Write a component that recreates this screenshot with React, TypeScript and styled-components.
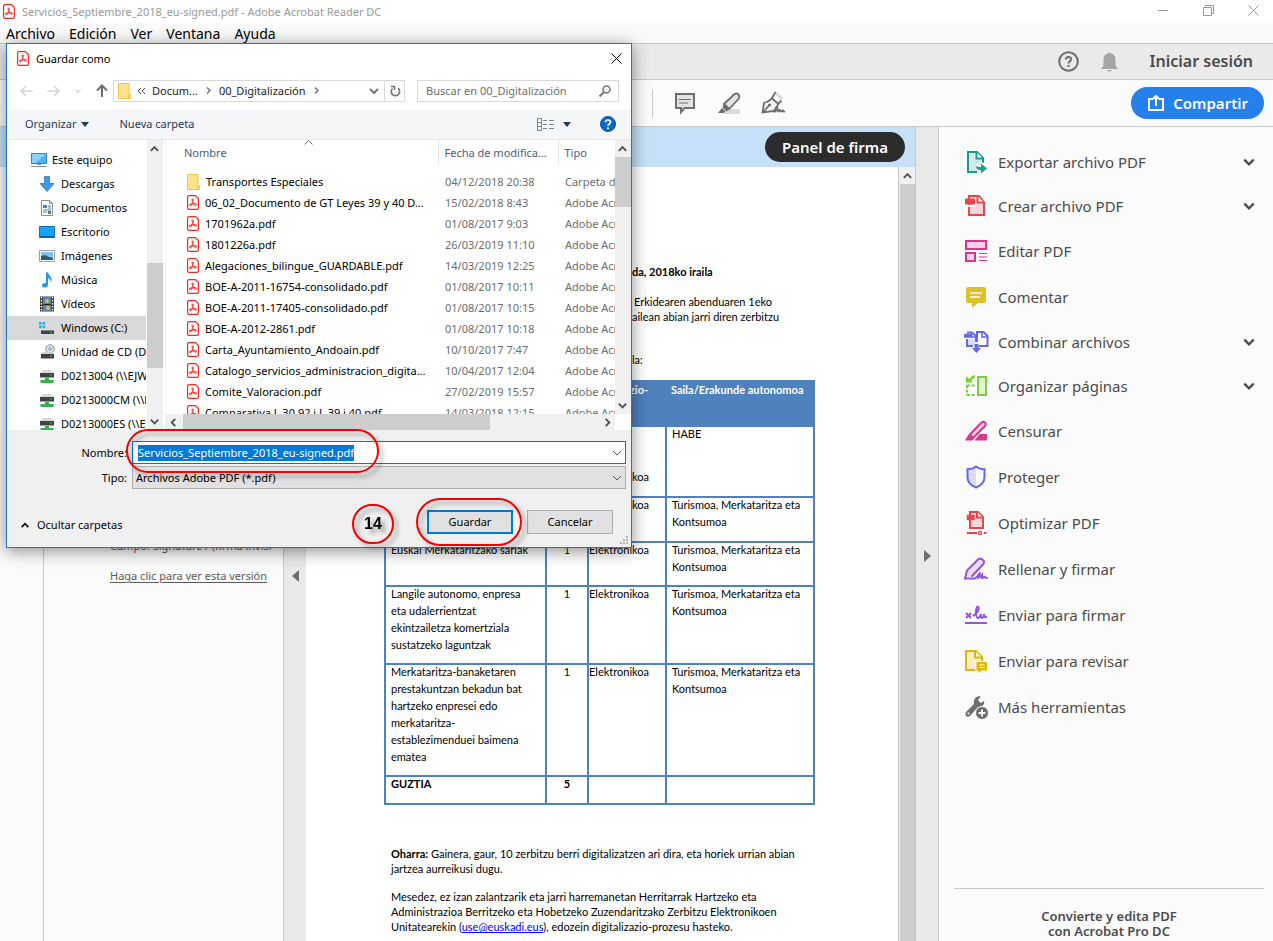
import React, { useEffect, useRef } from "react";
import styled, { createGlobalStyle, css } from "styled-components";

const Global = createGlobalStyle`
  *, *::before, *::after { box-sizing: border-box; }
  html, body, #root { height: 100%; }
  body {
    margin: 0;
    overflow: hidden;
    background: #fff;
    color: #000;
    font: 12px/16px "Noto Sans", "Open Sans", sans-serif;
  }
  button, input, select { font: inherit; color: inherit; }
  button { margin: 0; padding: 0; border: 0; background: none; text-align: left; }
  svg { display: block; flex: none; }
`;

/* ---------- application window ---------- */

const AppWindow = styled.div`
  position: relative;
  display: flex;
  flex-direction: column;
  height: 100vh;
  overflow: hidden;
`;

const TitleBar = styled.header`
  display: flex;
  align-items: center;
  height: 23px;
  flex: none;
  padding: 0 14px 0 3px;
  gap: 7px;
  background: #fff;
  color: #999;
  font-size: 11px;
`;

const WindowButtons = styled.div`
  display: flex;
  align-items: center;
  gap: 34px;
  margin-left: auto;
  padding-bottom: 2px;
`;

const MenuBar = styled.nav`
  display: flex;
  align-items: center;
  gap: 14px;
  height: 21px;
  flex: none;
  padding: 2px 6px 0;
  background: #fafafa;
  border-bottom: 1px solid #c8c8c8;
  font-size: 14px;
  line-height: 18px;
`;

const AccountBar = styled.div`
  display: flex;
  align-items: center;
  justify-content: flex-end;
  height: 36px;
  flex: none;
  padding: 0 20px;
  background: #eaeaea;
  border-bottom: 1px solid #c8c8c8;
  color: #4b4b4b;
`;

const IconButton = styled.button<{ $gap?: number }>`
  display: block;
  margin-right: ${(p) => p.$gap ?? 0}px;
`;

const SignIn = styled.button`
  padding-bottom: 2px;
  font-size: 16px;
  line-height: 20px;
  font-weight: 600;
`;

const Toolbar = styled.div`
  display: flex;
  align-items: center;
  height: 47px;
  flex: none;
  padding: 0 9px 0 652px;
  background: #fbfbfb;
  border-bottom: 1px solid #c8c8c8;
  color: #6e6e6e;
`;

const ToolbarRule = styled.span`
  width: 1px;
  height: 28px;
  margin-right: 20px;
  background: #c8c8c8;
`;

const ShareButton = styled.button`
  display: flex;
  align-items: center;
  gap: 8px;
  height: 32px;
  margin-left: auto;
  padding: 0 16px;
  border-radius: 16px;
  background: #2680eb;
  color: #fff;
  font-size: 15px;
  font-weight: 600;
`;

const Workspace = styled.div`
  display: flex;
  flex: 1;
  min-height: 0;
`;

const MainColumn = styled.main`
  display: flex;
  flex-direction: column;
  flex: 1;
  min-width: 0;
  border-right: 1px solid #c8c8c8;
`;

const SignatureBar = styled.div`
  display: flex;
  align-items: center;
  justify-content: flex-end;
  height: 40px;
  flex: none;
  padding: 0 10px;
  background: #c6e1f7;
`;

const SignatureButton = styled.button`
  height: 30px;
  padding: 0 17px;
  border-radius: 15px;
  background: #2c2c2c;
  color: #fff;
  font-size: 15px;
  font-weight: 600;
`;

const Panes = styled.div`
  display: flex;
  flex: 1;
  min-height: 0;
`;

const Rail = styled.div`
  width: 44px;
  flex: none;
  background: #fbfbfb;
  border-right: 1px solid #c8c8c8;
`;

const SignaturePane = styled.aside`
  display: flex;
  flex-direction: column;
  gap: 14px;
  width: 240px;
  flex: none;
  padding: 371px 8px 0 66px;
  overflow: hidden;
  background: #fbfbfb;
  border-right: 1px solid #c8c8c8;
  color: #5a5a5a;
  font-size: 11px;
  white-space: nowrap;
  a { color: inherit; text-underline-offset: 2px; }
`;

const Collapser = styled.button<{ $top: number; $edge?: boolean }>`
  display: flex;
  justify-content: center;
  width: 22px;
  flex: none;
  padding-top: ${(p) => p.$top}px;
  background: #e9e9e9;
  ${(p) => p.$edge && css`border-right: 1px solid #c8c8c8; width: 23px;`}
`;

/* ---------- scroll bars ---------- */

const Track = styled.div<{ $horizontal?: boolean; $size: number }>`
  display: flex;
  flex-direction: ${(p) => (p.$horizontal ? "row" : "column")};
  ${(p) => (p.$horizontal ? "height" : "width")}: ${(p) => p.$size}px;
  flex: none;
  background: #f0f0f0;
`;

const Arrow = styled.button`
  display: grid;
  place-items: center;
  width: 15px;
  height: 17px;
  flex: none;
  color: #505050;
`;

const Thumb = styled.div<{ $length?: number; $offset?: number; $horizontal?: boolean }>`
  background: #cdcdcd;
  flex: none;
  ${(p) =>
    p.$horizontal
      ? css`width: ${p.$length}px; margin: 0 auto 0 2px;`
      : css`
          height: ${p.$length}px;
          margin-top: ${p.$offset ?? 0}px;
          margin-bottom: auto;
        `}
`;

const PageTrack = styled(Track)`
  border-left: 1px solid #c8c8c8;
  padding-left: 1px;
`;

const PageThumb = styled.div`
  flex: 1;
  background: #cdcdcd;
`;

/* ---------- document ---------- */

const Page = styled.article`
  flex: 1;
  min-width: 0;
  padding: 97px 78px 0 78px;
  background: #fff;
  overflow: hidden;
  font: 11px/15px Lato, "Open Sans", sans-serif;
`;

const Line = styled.p<{ $indent?: number; $space?: number; $bold?: boolean }>`
  margin: 0 0 ${(p) => p.$space ?? 0}px;
  padding-left: ${(p) => p.$indent ?? 7}px;
  font-weight: ${(p) => (p.$bold ? 700 : 400)};
  white-space: nowrap;
  a { color: #00f; }
`;

const Services = styled.table`
  width: 431px;
  border-collapse: collapse;
  table-layout: fixed;
  line-height: 17px;
`;

const Head = styled.th`
  height: 45px;
  padding: 0 4px;
  vertical-align: top;
  text-align: left;
  line-height: 15px;
  white-space: nowrap;
  background: #4f81bd;
  color: #fff;
  border: 2px solid #4f81bd;
  border-left: 1px solid #fff;
  &:first-child { border-left: 2px solid #4f81bd; }
`;

const CellBox = styled.td<{ $h?: number; $center?: boolean; $tight?: boolean; $bold?: boolean }>`
  height: ${(p) => (p.$h ? `${p.$h}px` : "auto")};
  padding: 0 ${(p) => (p.$tight ? 0 : 4)}px 0 ${(p) => (p.$tight ? 0 : p.$center ? 4 : 5)}px;
  vertical-align: top;
  text-align: ${(p) => (p.$center ? "center" : "left")};
  font-weight: ${(p) => (p.$bold ? 700 : 400)};
  border: 2px solid #4f81bd;
`;

const CellText = styled.div<{ $low?: boolean }>`
  margin-top: ${(p) => (p.$low ? 41 : -2)}px;
`;

const Notes = styled.section`
  padding-top: 41px;
`;

/* ---------- tools panel ---------- */

const ToolsPanel = styled.aside`
  display: flex;
  flex-direction: column;
  width: 334px;
  flex: none;
  padding: 13px 9px 0 15px;
  background: #fbfbfb;
  color: #4b4b4b;
`;

const Tool = styled.button<{ $expands?: boolean }>`
  display: flex;
  align-items: center;
  gap: 9px;
  width: 100%;
  height: ${(p) => (p.$expands ? 44 : 46)}px;
  flex: none;
  padding: 0 8px 0 10px;
  font-size: 15px;
  line-height: 20px;
  svg:last-child:not(:first-child) { margin-left: auto; }
`;

const Promo = styled.p`
  height: 53px;
  margin: auto 0 0;
  padding-top: 20px;
  border-top: 1px solid #c8c8c8;
  overflow: hidden;
  text-align: center;
  font-size: 13px;
  line-height: 15px;
  font-weight: 600;
`;

/* ---------- save dialog ---------- */

const Dialog = styled.form`
  position: absolute;
  left: 6px;
  top: 43px;
  display: flex;
  flex-direction: column;
  width: 626px;
  height: 505px;
  background: #fff;
  border: 1px solid #1879c9;
  box-shadow: 0 3px 16px rgba(0, 0, 0, 0.45);
  font-size: 11px;
`;

const DialogTitle = styled.div`
  display: flex;
  align-items: center;
  gap: 7px;
  height: 29px;
  padding: 0 9px 0 10px;
  button { margin-left: auto; }
`;

const PathRow = styled.div`
  display: flex;
  align-items: center;
  height: 36px;
  padding: 0 12px 1px 13px;
  color: #808080;
`;

const HistoryButtons = styled.div`
  display: flex;
  align-items: center;
  width: 93px;
  gap: 14px;
`;

const AddressBox = styled.div`
  display: flex;
  align-items: center;
  gap: 6px;
  width: 272px;
  height: 22px;
  padding: 0 4px;
  border: 1px solid #d9d9d9;
  color: #222;
  svg:last-child { margin-left: auto; }
`;

const Refresh = styled.button`
  display: grid;
  place-items: center;
  width: 20px;
  height: 22px;
  border: 1px solid #d9d9d9;
  border-left: 0;
`;

const SearchBox = styled.label`
  display: flex;
  align-items: center;
  flex: 1;
  height: 22px;
  margin-left: 12px;
  padding: 0 7px 0 8px;
  border: 1px solid #d9d9d9;
  input {
    flex: 1;
    min-width: 0;
    padding: 0;
    border: 0;
    outline: 0;
    background: none;
  }
  input::placeholder { color: #6d6d6d; opacity: 1; }
`;

const CommandBar = styled.div`
  display: flex;
  align-items: center;
  height: 31px;
  padding: 0 15px 0 18px;
  background: #f5f6f7;
  border-bottom: 1px solid #e8e8e8;
  color: #1e395b;
`;

const Command = styled.button<{ $gap?: number; $push?: boolean }>`
  display: flex;
  align-items: center;
  gap: ${(p) => (p.$push ? 9 : 5)}px;
  margin-right: ${(p) => p.$gap ?? 0}px;
  margin-left: ${(p) => (p.$push ? "auto" : 0)};
`;

const Browser = styled.div`
  display: flex;
  height: 290px;
`;

const Tree = styled.nav`
  width: 140px;
  flex: none;
  padding-top: 8px;
  overflow: hidden;
`;

const Place = styled.button<{ $root?: boolean; $active?: boolean }>`
  display: flex;
  align-items: center;
  gap: ${(p) => (p.$root ? 5 : 6)}px;
  width: 139px;
  height: 24px;
  padding-left: ${(p) => (p.$root ? 24 : 32)}px;
  overflow: hidden;
  white-space: nowrap;
  background: ${(p) => (p.$active ? "#d9d9d9" : "transparent")};
`;

const FilePane = styled.div`
  display: grid;
  grid-template: 274px 16px / 1fr 16px;
  flex: 1;
  min-width: 0;
  margin-left: 2px;
  border-left: 1px solid #f0f0f0;
`;

const FileList = styled.div`
  overflow: hidden;
`;

const Files = styled.table`
  width: 100%;
  border-collapse: collapse;
  table-layout: fixed;
  white-space: nowrap;
  color: #6d6d6d;
  th {
    height: 25px;
    padding: 0 0 0 6px;
    font-weight: 400;
    text-align: left;
    color: #4c607a;
    border-left: 1px solid #e5e5e5;
  }
  th:first-child { padding-left: 18px; border: 0; }
  td {
    height: 21px;
    padding: 0 0 0 7px;
    overflow: hidden;
  }
  tbody::before { content: ""; display: table-row; height: 6px; }
`;

const FileName = styled.td`
  && { padding-left: 21px; color: #000; }
  div { display: flex; align-items: center; gap: 6px; }
`;

const NameHead = styled.div`
  position: relative;
  svg { position: absolute; left: 120px; top: -5px; }
`;

const Footer = styled.div`
  flex: 1;
  padding: 11px 5px 0 0;
  background: #f0f0f0;
`;

const Field = styled.div<{ $active?: boolean }>`
  display: flex;
  align-items: center;
  margin-bottom: 2px;
  > label { width: 125px; padding-right: 5px; text-align: right; }
  > div {
    display: flex;
    align-items: center;
    flex: 1;
    height: 23px;
    padding-right: 2px;
    border: 1px solid ${(p) => (p.$active ? "#0078d7" : "#adadad")};
    background: ${(p) => (p.$active ? "#fff" : "#e1e1e1")};
    color: #505050;
  }
  input, select {
    flex: 1;
    height: 16px;
    margin: 0;
    border: 0;
    outline: 0;
    padding: 0 3px;
    appearance: none;
    background: none;
    color: #000;
    line-height: 16px;
  }
  input { padding: 0 5px; }
  input::selection { background: #0078d7; color: #fff; }
`;

const Actions = styled.div`
  display: flex;
  align-items: center;
  justify-content: flex-end;
  gap: 14px;
  padding: 19px 13px 0;
`;

const HideFolders = styled.button`
  display: flex;
  align-items: center;
  gap: 7px;
  margin-right: auto;
  padding-top: 6px;
`;

const PushButton = styled.button<{ $primary?: boolean }>`
  width: 86px;
  height: 24px;
  border: ${(p) => (p.$primary ? "2px solid #0078d7" : "1px solid #adadad")};
  background: #e1e1e1;
  text-align: center;
`;

const Grip = styled.svg`
  position: absolute;
  right: 2px;
  bottom: 2px;
`;

const Callout = styled.div<{ $x: number; $y: number; $w: number; $h: number; $r: number }>`
  position: absolute;
  left: ${(p) => p.$x}px;
  top: ${(p) => p.$y}px;
  width: ${(p) => p.$w}px;
  height: ${(p) => p.$h}px;
  display: grid;
  place-items: center;
  border: 2px solid #f40000;
  border-radius: ${(p) => p.$r}px;
  filter: drop-shadow(4px 4px 2px rgba(0, 0, 0, 0.35));
  pointer-events: none;
  font: bold 16px/18px "Liberation Sans", Arial, sans-serif;
`;

/* ---------- icons ---------- */

type ChevronProps = { dir?: "up" | "down" | "left" | "right"; size?: number; weight?: number; color?: string };

const chevronPaths = {
  up: "M2 8.500 6 4.500 10 8.500",
  down: "M2 4 6 8 10 4",
  left: "M8 2 4 6 8 10",
  right: "M4 2 8 6 4 10",
};

const Chevron = ({ dir = "down", size = 12, weight = 2, color = "currentColor" }: ChevronProps) => (
  <svg width={size} height={size} viewBox="0 0 12 12" fill="none" stroke={color} strokeWidth={weight}>
    <path d={chevronPaths[dir]} />
  </svg>
);

const Triangle = ({ dir, size = 8 }: { dir: "down" | "left" | "right"; size?: number }) => (
  <svg width={size} height={size === 8 ? 5 : 12} viewBox={size === 8 ? "0 0 8 5" : "0 0 7 12"} fill={size === 8 ? "#1e395b" : "#6e6e6e"}>
    <path d={dir === "down" ? "M0 0h8L4 5z" : dir === "left" ? "M7 0v12L0 6z" : "M0 0v12l7-6z"} />
  </svg>
);

const PdfIcon = () => (
  <svg width="12" height="15" viewBox="0 0 12 15" fill="none" stroke="#ef2a22">
    <path d="M2 .6h6.500L11.400 3.500v9.500q0 1.400-1.400 1.400H2Q.6 14.400.6 13V2Q.6.600 2 .6z" strokeWidth="1.200" fill="#fff" />
    <path d="M5.800 7.600 4.200 9.600M6 7.600l1.800 1.300M5.700 7.300V5.900" strokeWidth="1.100" />
    <circle cx="5.700" cy="5" r=".9" strokeWidth="1" />
    <circle cx="3.400" cy="10" r=".9" strokeWidth="1" />
    <circle cx="8.600" cy="9.500" r=".9" strokeWidth="1" />
    <path d="M4 9.300 8 8.900" strokeWidth=".9" />
  </svg>
);

const FolderIcon = () => (
  <svg width="13" height="16" viewBox="0 0 13 16">
    <path d="M.5.500h10.500v11h1.500v4H.5z" fill="#ffe28a" stroke="#edc64f" />
    <path d="M10.500 11.500v4" stroke="#edc64f" />
  </svg>
);

const CloseIcon = ({ color = "#000" }: { color?: string }) => (
  <svg width="11" height="11" viewBox="0 0 11 11" stroke={color} fill="none">
    <path d="M.5.500l10 10M10.500.500l-10 10" />
  </svg>
);

const treeArt: Record<string, React.ReactNode> = {
  computer: (
    <>
      <path d="M.5 1.500h15v10H.5z" fill="#49b5f5" stroke="#2a86c5" />
      <path d="M1 2h14L4 11H1z" fill="#86d2fb" />
      <path d="M6 12h4v1H6zM0 14h16v1H0z" fill="#7b93a8" />
    </>
  ),
  download: <path d="M5.500.500h5v7H15L8 15.500 1 7.500h4.500z" fill="#3c9be8" stroke="#2a78c0" strokeWidth=".8" />,
  documents: (
    <>
      <path d="M2.500.500h8l3 3v12h-11z" fill="#fff" stroke="#8a8f94" />
      <path d="M10.500.500v3h3" fill="none" stroke="#8a8f94" />
      <path d="M4 5h4v3H4z" fill="#3a8bd0" />
      <path d="M9 6h3M9 8h3M4 10h8M4 12h4" stroke="#4e7ba0" />
      <path d="M9 11h3v3H9z" fill="#5c8a5c" />
    </>
  ),
  desktop: (
    <>
      <path d="M.5 2.500h15v11H.5z" fill="#18a0fb" stroke="#0b73c0" />
      <path d="M1 12h14v1.500H1z" fill="#0e5a94" />
    </>
  ),
  pictures: (
    <>
      <path d="M.5 2.500h15v11H.5z" fill="#fff" stroke="#9aa0a6" />
      <path d="M2 4h12v8H2z" fill="#7ec3ee" />
      <path d="M2 8l4-1 4 2 4 1v2H2z" fill="#2d5b74" />
    </>
  ),
  music: <path d="M7 .5h2c.4 2.500 3.500 3.500 3.500 7 0 1.500-.5 2.500-1 3 .3-2.500-.8-4-2.500-4.500v6.500c0 1.800-1.400 3-3.200 3-1.600 0-2.800-.9-2.800-2.200 0-1.500 1.500-2.600 4-2.400z" fill="#1a9bf0" />,
  videos: (
    <>
      <path d="M1 .500h14v15H1z" fill="#3a3a3a" />
      <path d="M4 1h8v14H4z" fill="#4d86c8" />
      <path d="M4 8h8v1H4z" fill="#222" />
      <circle cx="8" cy="5" r="2" fill="#e6b93a" />
      <circle cx="9" cy="12" r="2" fill="#e6b93a" />
      <path d="M2.500 1v14M13.500 1v14" stroke="#fff" strokeWidth="1.400" strokeDasharray="1.500 1.500" />
    </>
  ),
  windows: (
    <>
      <path d="M0 2h2.600v2.600H0zM3.600 2h2.600v2.600H3.600zM0 5.600h2.600v2.600H0zM3.600 5.600h2.600v2.600H3.600z" fill="#19b5ea" />
      <path d="M4 8.500h9l2 2H2z" fill="#d6d8da" />
      <path d="M2 10.500h13V14H2z" fill="#3f4345" />
      <path d="M11 12.500h2" stroke="#4fd04f" />
    </>
  ),
  cd: (
    <>
      <circle cx="11" cy="5" r="4.200" fill="#dfe3e6" stroke="#8d9296" />
      <circle cx="11" cy="5" r="1.300" fill="#fff" stroke="#8d9296" />
      <path d="M4 8h9l2 2H2z" fill="#cfd2d4" />
      <path d="M2 10h13v4.500H2z" fill="#3f4345" />
      <path d="M11 12h2" stroke="#4fd04f" />
    </>
  ),
  network: (
    <>
      <path d="M4 2h8l3 3H1z" fill="#d6d8da" />
      <path d="M1 5h14v4.500H1z" fill="#3f4345" />
      <path d="M11 7h2" stroke="#4fd04f" />
      <path d="M6 10h4v2h4.500v3H1.500v-3H6z" fill="#35b24a" />
    </>
  ),
};

const TreeIcon = ({ name }: { name: string }) => (
  <svg width="16" height="16" viewBox="0 0 16 16">{treeArt[name]}</svg>
);

const toolArt: Record<string, React.ReactNode> = {
  export: (
    <>
      <path d="M13 22H4V2h9l6 6v5" fill="#d2ebe6" stroke="#1b9a94" strokeWidth="2" />
      <path d="M12.500 2v6.500H19" fill="#fbfbfb" stroke="#1b9a94" strokeWidth="2" />
      <path d="M12 14h4l3-2v10h-6z" fill="#fbfbfb" />
      <path d="M12 15.500q1 1.500 5 1.500v-3.500l6 5-6 5V20q-5 .5-5-4.500z" fill="#1b9a94" />
    </>
  ),
  create: (
    <>
      <path d="M5 2h10l5 6v13H5z" fill="#f6d5d8" stroke="#e34850" strokeWidth="2" />
      <path d="M13.500 2v6.500H20" fill="#fbfbfb" stroke="#e34850" strokeWidth="2" />
      <path d="M4 11h6l1.500-2v4H4z" fill="#fbfbfb" />
      <path d="M2 5.500h8v4H2z" fill="#e34850" stroke="#e34850" strokeWidth="2" strokeLinejoin="round" />
    </>
  ),
  edit: (
    <g fill="#f7d3e6" stroke="#d83790" strokeWidth="2">
      <path d="M2 2h20v8H2zM2 14h9v8H2z" />
      <path d="M15 14.500h8M15 18h8M15 21.500h8" strokeWidth="1.200" />
    </g>
  ),
  comment: (
    <>
      <path d="M2 4q0-2 2-2h16q2 0 2 2v12q0 2-2 2h-6l-6 5v-5H4q-2 0-2-2z" fill="#dfbf2c" />
      <path d="M6 8h12M6 12h10" stroke="#fff" strokeWidth="1.600" />
    </>
  ),
  combine: (
    <g fill="none" stroke="#6767ec" strokeWidth="2">
      <path d="M3 9v7h6M3 2.500h5l4 3.500v6M15 16h8.500V6L19.500 2H13v10" />
      <path d="M4 9h7v6H4z" fill="#dcdcf8" stroke="none" />
      <path d="M18 2v5h5M7.500 3v4H12" strokeWidth="1.600" />
      <path d="M1 5.800h5" strokeWidth="4" strokeLinecap="round" />
      <path d="M12.500 14v4" strokeWidth="4" />
      <path d="M8 18h9l-4.500 5z" fill="#6767ec" stroke="none" />
    </g>
  ),
  organize: (
    <g fill="none" stroke="#7ccf3c" strokeWidth="2">
      <path d="M14 3h8v18h-8z" fill="#e2f3d6" />
      <path d="M3 11.500h9M3 21h9M3 11v10" strokeDasharray="3 1.500" />
      <path d="M11 2.500q-3 0-5 4" strokeWidth="2.500" />
      <path d="M2 2v6.500h7z" fill="#7ccf3c" stroke="none" />
    </g>
  ),
  redact: (
    <g stroke="#d83790" strokeWidth="2">
      <path d="M6 15.500 17.500 3.500q2-1.500 3.500 0 1.500 1.500 0 3.500L9 19z" fill="#f7d3e6" />
      <path d="M1 21.500l3.500-6 5.500 5-2 1z" fill="#d83790" stroke="none" />
      <path d="M10.500 21.500l5-6.500H23v6.500z" fill="#d83790" stroke="none" />
    </g>
  ),
  protect: (
    <>
      <path d="M12 1.500C9.500 3.500 6.500 4.300 3.500 4.300V12c0 5 3.500 8.500 8.500 10.500z" fill="#dcdcf8" />
      <path d="M12 1.500c2.500 2 5.500 2.800 8.500 2.800V12c0 5-3.500 8.500-8.500 10.500C7 20.500 3.500 17 3.500 12V4.300c3 0 6-.8 8.500-2.800z" fill="none" stroke="#6767ec" strokeWidth="2" />
    </>
  ),
  optimize: (
    <>
      <path d="M6 1h8l5 5v11H6z" fill="#f6d5d8" stroke="#e34850" strokeWidth="2" />
      <path d="M13 1v5.500h6" fill="#fbfbfb" stroke="#e34850" strokeWidth="2" />
      <path d="M3.500 4.500H10v4H3.500z" fill="#e34850" stroke="#e34850" strokeLinejoin="round" strokeWidth="1.500" />
      <path d="M3 22h10M20 22h2.500" stroke="#e34850" strokeWidth="2" />
      <circle cx="16" cy="22" r="1.600" fill="#f6d5d8" stroke="#e34850" strokeWidth="1.300" />
    </>
  ),
  fill: (
    <g fill="none" stroke="#9256d9" strokeWidth="2" strokeLinecap="round">
      <path d="M1 21.500l2-8L14 2.500q2.500-2 5 .5 2 2 0 4.500L8 19" fill="#e8dcf7" />
      <path d="M1 21.500h10q3-2 5-6 0 3-1 5 2-1 3-2.500v3q2 0 2.500-2 .5 2 2.500 2" />
    </g>
  ),
  sign: (
    <g fill="none" stroke="#9256d9" strokeWidth="2">
      <path d="M2 10l5 5M7 10l-5 5" />
      <path d="M9 13q7-5 5.500-9-2-1.500-2.500 4 0 7 2 7t3-4q-.5 4 1 4t2-4q0 4 3 3" />
      <path d="M1 20h22" />
    </g>
  ),
  review: (
    <>
      <path d="M11 21H2V2h10l6 6v4" fill="#f6eec8" stroke="#dfb900" strokeWidth="2" />
      <path d="M11 2v6.500h7" fill="#fbfbfb" stroke="#dfb900" strokeWidth="2" />
      <path d="M11 12h13v10H11z" fill="#fbfbfb" />
      <path d="M12.500 13H23v8.500h-5.500L14.500 24v-2.500h-2z" fill="#dfb900" />
      <path d="M15.500 16h5M15.500 18.500h5" stroke="#fff" />
    </>
  ),
  more: (
    <>
      <path d="M2 17 10 9q-1-4 2-6.500 2.500-2 5-1l-3 3.500 2.500 3 3.500-2q1 3-2 5-2 1.500-4 1l-8 9q-2 1.500-4 0-1.500-2 0-4z" fill="#6e6e6e" />
      <circle cx="4.500" cy="18.500" r="1" fill="#fbfbfb" />
      <circle cx="18" cy="18" r="6.500" fill="#6e6e6e" stroke="#fbfbfb" />
      <path d="M18 14.500v7M14.500 18h7" stroke="#fff" strokeWidth="1.800" />
    </>
  ),
};

const ToolIcon = ({ name }: { name: string }) => (
  <svg width="25" height="25" viewBox="0 0 25 25">{toolArt[name]}</svg>
);

/* ---------- data ---------- */

const places = [
  { icon: "computer", label: "Este equipo", root: true },
  { icon: "download", label: "Descargas" },
  { icon: "documents", label: "Documentos" },
  { icon: "desktop", label: "Escritorio" },
  { icon: "pictures", label: "Imágenes" },
  { icon: "music", label: "Música" },
  { icon: "videos", label: "Vídeos" },
  { icon: "windows", label: "Windows (C:)", active: true },
  { icon: "cd", label: "Unidad de CD (D:)" },
  { icon: "network", label: "D0213004 (\\\\EJWP" },
  { icon: "network", label: "D0213000CM (\\\\E" },
  { icon: "network", label: "D0213000ES (\\\\EJ" },
];

const files = [
  ["Transportes Especiales", "04/12/2018 20:38"],
  ["06_02_Documento de GT Leyes 39 y 40 D...", "15/02/2018 8:43"],
  ["1701962a.pdf", "01/08/2017 9:03"],
  ["1801226a.pdf", "26/03/2019 11:10"],
  ["Alegaciones_bilingue_GUARDABLE.pdf", "14/03/2019 12:25"],
  ["BOE-A-2011-16754-consolidado.pdf", "01/08/2017 10:11"],
  ["BOE-A-2011-17405-consolidado.pdf", "01/08/2017 10:15"],
  ["BOE-A-2012-2861.pdf", "01/08/2017 10:18"],
  ["Carta_Ayuntamiento_Andoain.pdf", "10/10/2017 7:47"],
  ["Catalogo_servicios_administracion_digita...", "10/04/2017 12:04"],
  ["Comite_Valoracion.pdf", "27/02/2019 15:57"],
  ["Comparativa L 30.92 i L 39 i 40.pdf", "14/03/2018 12:15"],
];

const tools = [
  { icon: "export", label: "Exportar archivo PDF", expands: true },
  { icon: "create", label: "Crear archivo PDF", expands: true },
  { icon: "edit", label: "Editar PDF" },
  { icon: "comment", label: "Comentar" },
  { icon: "combine", label: "Combinar archivos", expands: true },
  { icon: "organize", label: "Organizar páginas", expands: true },
  { icon: "redact", label: "Censurar" },
  { icon: "protect", label: "Proteger" },
  { icon: "optimize", label: "Optimizar PDF" },
  { icon: "fill", label: "Rellenar y firmar" },
  { icon: "sign", label: "Enviar para firmar" },
  { icon: "review", label: "Enviar para revisar" },
  { icon: "more", label: "Más herramientas" },
];

/* ---------- sections ---------- */

type CellProps = {
  $h?: number;
  $center?: boolean;
  $tight?: boolean;
  $bold?: boolean;
  $low?: boolean;
  children?: React.ReactNode;
};

const Cell = ({ children, $low, ...rest }: CellProps) => (
  <CellBox {...rest}>{children && <CellText $low={$low}>{children}</CellText>}</CellBox>
);

const dept = <>Turismoa, Merkataritza eta<br />Kontsumoa</>;

const SaveDialog = () => {
  const nameRef = useRef<HTMLInputElement>(null);
  useEffect(() => {
    nameRef.current?.focus();
    nameRef.current?.select();
  }, []);

  return (
    <Dialog role="dialog" aria-label="Guardar como" onSubmit={(e) => e.preventDefault()}>
      <DialogTitle>
        <PdfIcon />
        <span>Guardar como</span>
        <button type="button" aria-label="Cerrar"><CloseIcon /></button>
      </DialogTitle>

      <PathRow>
        <HistoryButtons>
          <svg width="13" height="12" viewBox="0 0 13 12" fill="none" stroke="#d5d5d5" strokeWidth="1.500"><path d="M13 6H1M6 1 1 6l5 5" /></svg>
          <svg width="13" height="12" viewBox="0 0 13 12" fill="none" stroke="#d5d5d5" strokeWidth="1.500"><path d="M0 6h12M7 1l5 5-5 5" /></svg>
          <Chevron size={8} weight={2} color="#d5d5d5" />
          <svg width="12" height="13" viewBox="0 0 12 13" fill="none" stroke="#6e6e6e" strokeWidth="2"><path d="M6 13V2M1 6.500l5-5 5 5" /></svg>
        </HistoryButtons>
        <AddressBox>
          <FolderIcon />
          <svg width="9" height="8" viewBox="0 0 9 8" fill="none" stroke="#555"><path d="M4 1 1 4l3 3M8 1 5 4l3 3" /></svg>
          <span>Docum...</span>
          <Chevron dir="right" size={9} weight={2} color="#777" />
          <span>00_Digitalización</span>
          <Chevron dir="right" size={9} weight={2} color="#777" />
          <Chevron size={12} weight={2} color="#777" />
        </AddressBox>
        <Refresh type="button" aria-label="Actualizar">
          <svg width="12" height="12" viewBox="0 0 12 12" fill="none" stroke="#777" strokeWidth="1.700">
            <path d="M9 3.200a4.200 4.200 0 1 1-5.500.3M2 1.500h3.500V5" />
          </svg>
        </Refresh>
        <SearchBox>
          <input type="search" placeholder="Buscar en 00_Digitalización" aria-label="Buscar en 00_Digitalización" />
          <svg width="12" height="12" viewBox="0 0 12 12" fill="none" stroke="#777" strokeWidth="1.600"><circle cx="7.500" cy="4.500" r="3.500" /><path d="M5 7 .5 11.500" strokeWidth="2" /></svg>
        </SearchBox>
      </PathRow>

      <CommandBar>
        <Command type="button" $gap={30}>Organizar <Triangle dir="down" /></Command>
        <Command type="button">Nueva carpeta</Command>
        <Command type="button" $push $gap={29} aria-label="Vista">
          <svg width="17" height="13" viewBox="0 0 17 13" fill="none" stroke="#7b8590">
            <path d="M.5.500h4v12h-4zM.5 4.500h4M.5 8.500h4M6 2.500h4M12 2.500h5M6 6.500h4M12 6.500h5M6 10.500h4M12 10.500h5" />
          </svg>
          <Triangle dir="down" />
        </Command>
        <IconButton type="button" aria-label="Ayuda">
          <svg width="16" height="16" viewBox="0 0 16 16">
            <circle cx="8" cy="8" r="7.500" fill="#0a6acb" stroke="#0b4f9a" />
            <path d="M5.600 6.200C5.600 3.300 10.500 3.300 10.500 6c0 1.800-2.500 1.800-2.500 4" fill="none" stroke="#fff" strokeWidth="1.700" />
            <circle cx="8" cy="12.300" r="1.100" fill="#fff" />
          </svg>
        </IconButton>
      </CommandBar>

      <Browser>
        <Tree>
          {places.map((p) => (
            <Place type="button" key={p.label} $root={p.root} $active={p.active}>
              <TreeIcon name={p.icon} />
              {p.label}
            </Place>
          ))}
        </Tree>
        <Track $size={16}>
          <Arrow type="button" aria-label="Subir"><Chevron dir="up" size={11} /></Arrow>
          <Thumb $offset={106} $length={105} />
          <Arrow type="button" aria-label="Bajar"><Chevron size={11} /></Arrow>
        </Track>
        <FilePane>
          <FileList>
            <Files>
              <colgroup><col style={{ width: 272 }} /><col style={{ width: 120 }} /><col /></colgroup>
              <thead>
                <tr>
                  <th><NameHead>Nombre<svg width="9" height="5" viewBox="0 0 9 5" fill="none" stroke="#777"><path d="M.5 4.500l4-4 4 4" /></svg></NameHead></th>
                  <th>Fecha de modifica...</th>
                  <th>Tipo</th>
                </tr>
              </thead>
              <tbody>
                {files.map(([name, date], i) => (
                  <tr key={name}>
                    <FileName><div>{i === 0 ? <FolderIcon /> : <PdfIcon />}{name}</div></FileName>
                    <td>{date}</td>
                    <td>{i === 0 ? "Carpeta de archivos" : "Adobe Acrobat Document"}</td>
                  </tr>
                ))}
              </tbody>
            </Files>
          </FileList>
          <Track $size={16}>
            <Arrow type="button" aria-label="Subir"><Chevron dir="up" size={11} /></Arrow>
            <Thumb $length={50} />
            <Arrow type="button" aria-label="Bajar"><Chevron size={11} /></Arrow>
          </Track>
          <Track $size={16} $horizontal>
            <Arrow type="button" aria-label="Izquierda"><Chevron dir="left" size={11} /></Arrow>
            <Thumb $length={307} $horizontal />
            <Arrow type="button" aria-label="Derecha"><Chevron dir="right" size={11} /></Arrow>
          </Track>
        </FilePane>
      </Browser>

      <Footer>
        <Field $active>
          <label htmlFor="file-name">Nombre:</label>
          <div>
            <input id="file-name" ref={nameRef} defaultValue="Servicios_Septiembre_2018_eu-signed.pdf" />
            <Chevron weight={1} />
          </div>
        </Field>
        <Field>
          <label htmlFor="file-type">Tipo:</label>
          <div>
            <select id="file-type"><option>Archivos Adobe PDF (*.pdf)</option></select>
            <Chevron weight={1} />
          </div>
        </Field>
        <Actions>
          <HideFolders type="button"><Chevron dir="up" size={10} />Ocultar carpetas</HideFolders>
          <PushButton type="submit" $primary>Guardar</PushButton>
          <PushButton type="button">Cancelar</PushButton>
        </Actions>
      </Footer>

      <Grip width="9" height="9" viewBox="0 0 9 9" fill="#b5b5b5">
        <path d="M6 0h2v2H6zM3 3h2v2H3zM6 3h2v2H6zM0 6h2v2H0zM3 6h2v2H3zM6 6h2v2H6z" />
      </Grip>
      <Callout $x={119} $y={385} $w={253} $h={44} $r={22} />
      <Callout $x={409} $y={454} $w={106} $h={48} $r={24} />
      <Callout $x={345} $y={460} $w={42} $h={40} $r={22}>14</Callout>
    </Dialog>
  );
};

const DocumentPage = () => (
  <Page>
    <Line $indent={248} $space={15} $bold>da, 2018ko iraila</Line>
    <Line $indent={250}>Erkidearen abenduaren 1eko</Line>
    <Line $indent={248} $space={28}>ailean abian jarri diren zerbitzu</Line>
    <Line $indent={248} $space={13}>la:</Line>
    <Services>
      <colgroup><col style={{ width: 161 }} /><col style={{ width: 42 }} /><col style={{ width: 78 }} /><col /></colgroup>
      <thead>
        <tr><Head>Zerbitzua</Head><Head /><Head>Tramitazio-</Head><Head>Saila/Erakunde autonomoa</Head></tr>
      </thead>
      <tbody>
        <tr><Cell $h={71} /><Cell /><Cell $tight $low>Elektronikoa</Cell><Cell>HABE</Cell></tr>
        <tr><Cell $h={45} /><Cell $center>1</Cell><Cell $tight>Elektronikoa</Cell><Cell>{dept}</Cell></tr>
        <tr><Cell $h={44}>Euskal Merkataritzako sariak</Cell><Cell $center>1</Cell><Cell $tight>Elektronikoa</Cell><Cell>{dept}</Cell></tr>
        <tr>
          <Cell $h={78}>Langile autonomo, enpresa<br />eta udalerrientzat<br />ekintzailetza komertziala<br />sustatzeko laguntzak</Cell>
          <Cell $center>1</Cell><Cell $tight>Elektronikoa</Cell><Cell>{dept}</Cell>
        </tr>
        <tr>
          <Cell $h={112}>Merkataritza-banaketaren<br />prestakuntzan bekadun bat<br />hartzeko enpresei edo<br />merkataritza-<br />establezimenduei baimena<br />ematea</Cell>
          <Cell $center>1</Cell><Cell $tight>Elektronikoa</Cell><Cell>{dept}</Cell>
        </tr>
        <tr><Cell $h={28} $bold>GUZTIA</Cell><Cell $center $bold>5</Cell><Cell /><Cell /></tr>
      </tbody>
    </Services>
    <Notes>
      <Line $space={13}><b>Oharra:</b> Gainera, gaur, 10 zerbitzu berri digitalizatzen ari dira, eta horiek urrian abian<br />jartzea aurreikusi dugu.</Line>
      <Line>
        Mesedez, ez izan zalantzarik eta jarri harremanetan Herritarrak Hartzeko eta<br />
        Administrazioa Berritzeko eta Hobetzeko Zuzendaritzako Zerbitzu Elektronikoen<br />
        Unitatearekin (<a href="mailto:use@euskadi.eus">use@euskadi.eus</a>), edozein digitalizazio-prozesu hasteko.
      </Line>
    </Notes>
  </Page>
);

export default function App() {
  return (
    <AppWindow>
      <Global />
      <TitleBar>
        <PdfIcon />
        <span>Servicios_Septiembre_2018_eu-signed.pdf - Adobe Acrobat Reader DC</span>
        <WindowButtons>
          <button aria-label="Minimizar"><svg width="11" height="11" viewBox="0 0 11 11" stroke="#999"><path d="M0 5.500h10" /></svg></button>
          <button aria-label="Restaurar"><svg width="11" height="11" viewBox="0 0 11 11" fill="none" stroke="#999"><path d="M.5 2.500h8v8h-8zM2.500 2V.500h8v8H9" /></svg></button>
          <button aria-label="Cerrar"><CloseIcon color="#999" /></button>
        </WindowButtons>
      </TitleBar>
      <MenuBar>
        {["Archivo", "Edición", "Ver", "Ventana", "Ayuda"].map((m) => <button key={m}>{m}</button>)}
      </MenuBar>
      <AccountBar>
        <IconButton $gap={22} aria-label="Ayuda">
          <svg width="21" height="21" viewBox="0 0 21 21" fill="none" stroke="#6e6e6e" strokeWidth="2">
            <circle cx="10.500" cy="10.500" r="9.300" />
            <path d="M7.800 8.500c0-3.500 5.400-3.300 5.400-.3 0 2-2.700 2-2.700 4.300M10.500 14v2" />
          </svg>
        </IconButton>
        <IconButton $gap={32} aria-label="Notificaciones">
          <svg width="17" height="20" viewBox="0 0 17 20" fill="#a5a5a5">
            <path d="M7 1.500Q8.500-.500 10 1.500q4.500 1 4.500 6v5q0 2 2.500 4v.500H0v-.5q2.500-2 2.500-4v-5q0-5 4.500-6zM6 18h5q-2.500 3-5 0z" />
          </svg>
        </IconButton>
        <SignIn>Iniciar sesión</SignIn>
      </AccountBar>
      <Toolbar>
        <ToolbarRule />
        <IconButton $gap={20} aria-label="Comentario">
          <svg width="24" height="24" viewBox="0 0 24 24" fill="#e3e3e3" stroke="#6e6e6e" strokeWidth="2">
            <path d="M3 3h18v14h-9.500L8 21v-4H3z" /><path d="M6 8.500h12M6 12h9" strokeWidth="1.200" />
          </svg>
        </IconButton>
        <IconButton $gap={20} aria-label="Resaltar">
          <svg width="24" height="24" viewBox="0 0 24 24" fill="#e3e3e3" stroke="#6e6e6e" strokeWidth="1.800">
            <path d="M10 18h13v5H6z" fill="#dcdcdc" stroke="none" />
            <path d="M7 13 17 3.500q2.500-2 4.500 0 1.500 2 0 4.500L12 18z" />
            <path d="M7 12.500l5.500 5.500-3 2.500-4-4z" fill="#6e6e6e" stroke="none" />
            <path d="M1 22l4-5 3.500 3.500-2 1.500z" fill="#6e6e6e" stroke="none" />
          </svg>
        </IconButton>
        <IconButton aria-label="Firmar">
          <svg width="24" height="24" viewBox="0 0 24 24" fill="none" stroke="#6e6e6e" strokeWidth="1.800">
            <path d="M14 3l5.500 6.500L22 6.500 16 1z" fill="#dcdcdc" stroke="none" />
            <path d="M1.500 21.500 3 12q4-1 8-4.500L17.500 13q-3 4-4.500 7z" fill="#f4f4f4" />
            <path d="M2 21.500l6-7M10.500 8l4-7M16.500 13.500l4-4" />
            <circle cx="8.500" cy="14" r="1.600" fill="#6e6e6e" stroke="none" />
            <path d="M12 20.500q3 1 4.500-3 .5 3 1 3 1 0 1.500-2 .5 2 1.500 2 1-1 1.500-1 0 1.500 2 1" />
          </svg>
        </IconButton>
        <ShareButton>
          <svg width="18" height="18" viewBox="0 0 18 18" fill="none" stroke="#fff" strokeWidth="2">
            <path d="M6 5H2v11h14V5h-4M9 12V2M6 5l3-3 3 3" />
          </svg>
          Compartir
        </ShareButton>
      </Toolbar>
      <Workspace>
        <MainColumn>
          <SignatureBar><SignatureButton>Panel de firma</SignatureButton></SignatureBar>
          <Panes>
            <Rail />
            <SignaturePane>
              <span>Campo: Signature1 (firma invisi</span>
              <a href="#version">Haga clic para ver esta versión</a>
            </SignaturePane>
            <Collapser $top={403} aria-label="Ocultar panel izquierdo"><Triangle dir="left" size={7} /></Collapser>
            <DocumentPage />
            <PageTrack $size={17}>
              <Arrow aria-label="Subir"><Chevron dir="up" size={11} /></Arrow>
              <PageThumb />
            </PageTrack>
          </Panes>
        </MainColumn>
        <Collapser $top={423} $edge aria-label="Ocultar panel derecho"><Triangle dir="right" size={7} /></Collapser>
        <ToolsPanel>
          {tools.map((t) => (
            <Tool key={t.label} $expands={t.expands}>
              <ToolIcon name={t.icon} />
              {t.label}
              {t.expands && <Chevron size={14} weight={2} />}
            </Tool>
          ))}
          <Promo>Convierte y edita PDF<br />con Acrobat Pro DC</Promo>
        </ToolsPanel>
      </Workspace>
      <SaveDialog />
    </AppWindow>
  );
}
